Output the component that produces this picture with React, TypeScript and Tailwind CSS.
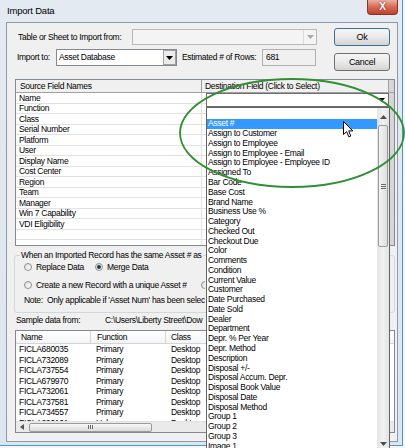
import React from "react";

const SOURCE_FIELDS = [
  "Name",
  "Function",
  "Class",
  "Serial Number",
  "Platform",
  "User",
  "Display Name",
  "Cost Center",
  "Region",
  "Team",
  "Manager",
  "Win 7 Capability",
  "VDI Eligibility",
  "",
  "",
];

const DEST_OPTIONS = [
  "",
  "Asset #",
  "Assign to Customer",
  "Assign to Employee",
  "Assign to Employee - Email",
  "Assign to Employee - Employee ID",
  "Assigned To",
  "Bar Code",
  "Base Cost",
  "Brand Name",
  "Business Use %",
  "Category",
  "Checked Out",
  "Checkout Due",
  "Color",
  "Comments",
  "Condition",
  "Current Value",
  "Customer",
  "Date Purchased",
  "Date Sold",
  "Dealer",
  "Department",
  "Depr. % Per Year",
  "Depr. Method",
  "Description",
  "Disposal +/-",
  "Disposal Accum. Depr.",
  "Disposal Book Value",
  "Disposal Date",
  "Disposal Method",
  "Group 1",
  "Group 2",
  "Group 3",
  "Image 1",
  "Image 2",
];

const SAMPLE_ROWS = [
  ["FICLA680035", "Primary", "Desktop"],
  ["FICLA732089", "Primary", "Desktop"],
  ["FICLA737554", "Primary", "Desktop"],
  ["FICLA679970", "Primary", "Desktop"],
  ["FICLA732061", "Primary", "Desktop"],
  ["FICLA737581", "Primary", "Desktop"],
  ["FICLA734557", "Primary", "Desktop"],
  ["FICLA690101", "Unknown", "Desktop"],
];

function Tri({ color = "#000", up = false }: { color?: string; up?: boolean }) {
  return (
    <svg width="7" height="4" viewBox="0 0 7 4">
      <path d={up ? "M0 4h7L3.5 0z" : "M0 0h7L3.5 4z"} fill={color} />
    </svg>
  );
}

function Radio({ checked = false }: { checked?: boolean }) {
  return (
    <span className="w-[8px] h-[8px] shrink-0 rounded-full border border-[#8e8f8f] bg-gradient-to-br from-[#dcdcdc] to-white flex items-center justify-center">
      {checked && <span className="w-[4px] h-[4px] rounded-full bg-[#22394d]" />}
    </span>
  );
}

function WinButton({ label, isDefault = false }: { label: string; isDefault?: boolean }) {
  return (
    <div
      className={`w-[56px] h-[18px] rounded-[3px] border flex items-center justify-center bg-gradient-to-b from-[#f6f6f6] via-[#e9e9e9] to-[#d4d4d4] text-[9px] ${
        isDefault ? "border-[#3c6f99]" : "border-[#707070]"
      }`}
    >
      {label}
    </div>
  );
}

export default function App() {
  return (
    <div className="relative w-[405px] h-[448px] overflow-hidden bg-[#f4f7fa] font-['Liberation_Sans',Arial,sans-serif] text-[8.5px] leading-none tracking-[-0.3px] text-black">
      {/* window frame */}
      <div className="flex flex-col w-[403px] h-[446px] bg-gradient-to-b from-[#e3eaf2] to-[#dde5ee] border-r border-b border-[#4a9ac6]">
        {/* title bar */}
        <div className="h-[22px] flex items-start justify-between shrink-0">
          <span className="pl-[7px] pt-[6px] text-[9.5px] tracking-[-0.2px]">Import Data</span>
          <div className="w-[31px] h-[15px] mr-[4px] rounded-b-[4px] border border-t-0 border-[#8a3426] bg-gradient-to-b from-[#eab0a3] via-[#d46a55] to-[#c2412b] flex items-center justify-center">
            <span className="text-white font-bold text-[10px] tracking-normal [text-shadow:0_0_2px_#5a1a10]">X</span>
          </div>
        </div>

        <div className="flex-1 flex pl-[6px] pr-[4px] pb-[3px] min-h-0">
          {/* dialog client area */}
          <div className="flex-1 flex flex-col border border-[#8d9aab] bg-[#f0f0f0] min-h-0">
            {/* top section */}
            <div className="flex h-[56px] shrink-0">
              <div className="w-[327px] flex flex-col pt-[6px] gap-[4px]">
                <div className="flex items-center h-[16px] pl-[11px]">
                  <span className="w-[114px]">Table or Sheet to Import from:</span>
                  <div className="w-[185px] h-[16px] border border-[#b5b9bd] bg-[#f4f4f4] flex justify-end">
                    <div className="w-[13px] h-full border-l border-[#dadada] flex items-center justify-center">
                      <Tri color="#a8a8a8" />
                    </div>
                  </div>
                </div>
                <div className="flex items-center h-[17px] pl-[10px]">
                  <span className="w-[39px]">Import to:</span>
                  <div className="w-[121px] h-[17px] border border-[#828790] bg-white flex items-center">
                    <span className="flex-1 pl-[2px]">Asset Database</span>
                    <div className="w-[13px] h-[15px] border border-[#a0a0a0] bg-[#ececec] flex items-center justify-center">
                      <Tri />
                    </div>
                  </div>
                  <span className="ml-[5px] w-[80px]">Estimated # of Rows:</span>
                  <div className="w-[54px] h-[17px] border border-[#b0b0b0] bg-[#f0f0f0] flex items-center pl-[3px]">681</div>
                </div>
              </div>
              <div className="flex flex-col gap-[7px] pt-[5px]">
                <WinButton label="Ok" isDefault />
                <WinButton label="Cancel" />
              </div>
            </div>

            {/* field mapping grid */}
            <div className="relative ml-[8px] w-[380px] h-[167px] shrink-0 border border-[#7f8a96] bg-white flex flex-col overflow-hidden">
              <div className="h-[13px] shrink-0 flex bg-[#f0f0f0] border-b border-[#a0a0a0]">
                <div className="w-[186px] border-r border-[#a0a0a0] pl-[4px] flex items-center">Source Field Names</div>
                <div className="w-[187px] border-r border-[#a0a0a0] pl-[3px] flex items-center">Destination Field (Click to Select)</div>
                <div className="flex-1 bg-[#d6d6d6]" />
              </div>
              {SOURCE_FIELDS.map((f, i) => (
                <div key={i} className="h-[10.5px] shrink-0 flex">
                  <div className="w-[186px] border-r border-b border-[#e2e2e2] pl-[3px] flex items-center">{f}</div>
                  <div className="w-[187px] border-b border-[#e2e2e2]" />
                  <div className="flex-1 bg-[#d6d6d6]" />
                </div>
              ))}
              {/* active cell editor */}
              <div className="absolute left-[190px] top-[13px] w-[183px] h-[14px] bg-white border border-[#6e6e6e] flex items-center justify-end pr-[3px]">
                <Tri />
              </div>
            </div>

            {/* duplicate handling group */}
            <div className="ml-[7px] mt-[9px] w-[381px] h-[58px] shrink-0 border border-[#d0d7dd] rounded-[3px] flex flex-col">
              <span className="-mt-[6px] ml-[5px] px-[1px] self-start max-w-[185px] overflow-hidden whitespace-nowrap bg-[#f0f0f0] h-[10px] flex items-center">
                When an Imported Record has the same Asset # as
              </span>
              <div className="mt-[2px] h-[10px] flex items-center pl-[9px]">
                <div className="w-[71px] flex items-center gap-[4px]">
                  <Radio />
                  <span>Replace Data</span>
                </div>
                <div className="flex items-center gap-[4px]">
                  <Radio checked />
                  <span>Merge Data</span>
                </div>
              </div>
              <div className="mt-[8px] h-[10px] w-[190px] overflow-hidden flex items-center pl-[9px]">
                <div className="w-[177px] shrink-0 flex items-center gap-[4px]">
                  <Radio />
                  <span>Create a new Record with a unique Asset #</span>
                </div>
                <Radio />
              </div>
              <div className="mt-[5px] h-[10px] w-[190px] overflow-hidden whitespace-nowrap flex items-center pl-[9px]">
                Note:&nbsp; Only applicable if 'Asset Num' has been selec
              </div>
            </div>

            {/* sample data */}
            <div className="mt-[2px] h-[10px] w-[198px] overflow-hidden whitespace-nowrap shrink-0 flex items-center pl-[9px]">
              <span className="w-[89px] shrink-0">Sample data from:</span>
              <span>{"C:\\Users\\Liberty Street\\Dow"}</span>
            </div>
            <div className="ml-[8px] mt-[5px] w-[380px] h-[103px] shrink-0 border border-[#828790] bg-white flex flex-col overflow-hidden">
              <div className="h-[13px] shrink-0 flex border-b border-[#d5d5d5] bg-gradient-to-b from-white to-[#f3f4f6]">
                <div className="w-[75px] border-r border-[#d5d5d5] pl-[5px] flex items-center">Name</div>
                <div className="w-[75px] border-r border-[#d5d5d5] pl-[6px] flex items-center">Function</div>
                <div className="w-[75px] border-r border-[#d5d5d5] pl-[5px] flex items-center">Class</div>
                <div className="flex-1" />
              </div>
              <div className="flex-1 min-h-0 overflow-hidden flex flex-col">
                {SAMPLE_ROWS.map((r, i) => (
                  <div key={i} className="h-[10.5px] shrink-0 flex">
                    <div className="w-[75px] pl-[3px] flex items-center">{r[0]}</div>
                    <div className="w-[75px] pl-[5px] flex items-center">{r[1]}</div>
                    <div className="w-[75px] pl-[5px] flex items-center">{r[2]}</div>
                  </div>
                ))}
              </div>
              {/* horizontal scrollbar */}
              <div className="h-[11px] shrink-0 flex items-center bg-[#eaeaea] border-t border-[#e0e0e0]">
                <div className="w-[12px] flex items-center justify-center">
                  <svg width="4" height="6" viewBox="0 0 4 6">
                    <path d="M4 0v6L0 3z" fill="#555" />
                  </svg>
                </div>
                <div className="ml-[1px] w-[123px] h-[9px] rounded-[2px] border border-[#9b9b9b] bg-gradient-to-b from-[#f7f7f7] to-[#dcdcdc] flex items-center justify-center gap-[1px]">
                  <span className="w-[1px] h-[4px] bg-[#6b6b6b]" />
                  <span className="w-[1px] h-[4px] bg-[#6b6b6b]" />
                  <span className="w-[1px] h-[4px] bg-[#6b6b6b]" />
                </div>
              </div>
            </div>
          </div>
        </div>
      </div>

      {/* open dropdown list */}
      <div className="absolute left-[206px] top-[107px] w-[184px] h-[346px] bg-white border border-[#646464] flex">
        <div className="w-[170px] flex flex-col pt-[1px]">
          {DEST_OPTIONS.map((o, i) => (
            <div
              key={i}
              className={`h-[9.78px] shrink-0 flex items-center pl-[1px] whitespace-nowrap ${
                i === 1 ? "bg-[#3399ff] text-white" : ""
              }`}
            >
              {o}
            </div>
          ))}
        </div>
        <div className="w-[12px] flex flex-col bg-gradient-to-r from-[#e3e3e3] via-[#f2f2f2] to-[#e3e3e3]">
          <div className="h-[17px] flex items-center justify-center">
            <Tri up color="#4d4d4d" />
          </div>
          <div className="h-[122px] mx-[1px] rounded-[2px] border border-[#9a9a9a] bg-gradient-to-r from-[#f4f4f4] to-[#dedede] flex flex-col items-center justify-center gap-[1px]">
            <span className="w-[5px] h-[1px] bg-[#6b6b6b]" />
            <span className="w-[5px] h-[1px] bg-[#6b6b6b]" />
            <span className="w-[5px] h-[1px] bg-[#6b6b6b]" />
          </div>
          <div className="flex-1" />
          <div className="h-[17px] flex items-center justify-center">
            <Tri color="#4d4d4d" />
          </div>
        </div>
      </div>

      {/* mouse pointer */}
      <svg className="absolute left-[343px] top-[121px]" width="11" height="17" viewBox="0 0 11 17">
        <path d="M0.5 0.5 L0.5 13.5 L3.6 10.6 L5.8 15.8 L7.8 15 L5.7 9.9 L9.8 9.9 Z" fill="#fff" stroke="#000" strokeWidth="1" strokeLinejoin="round" />
      </svg>

      {/* annotation ellipse */}
      <svg className="absolute left-0 top-0 pointer-events-none" width="405" height="448" viewBox="0 0 405 448">
        <ellipse cx="292" cy="133" rx="112" ry="54" fill="none" stroke="#2f8f32" strokeWidth="1.8" />
      </svg>
    </div>
  );
}
